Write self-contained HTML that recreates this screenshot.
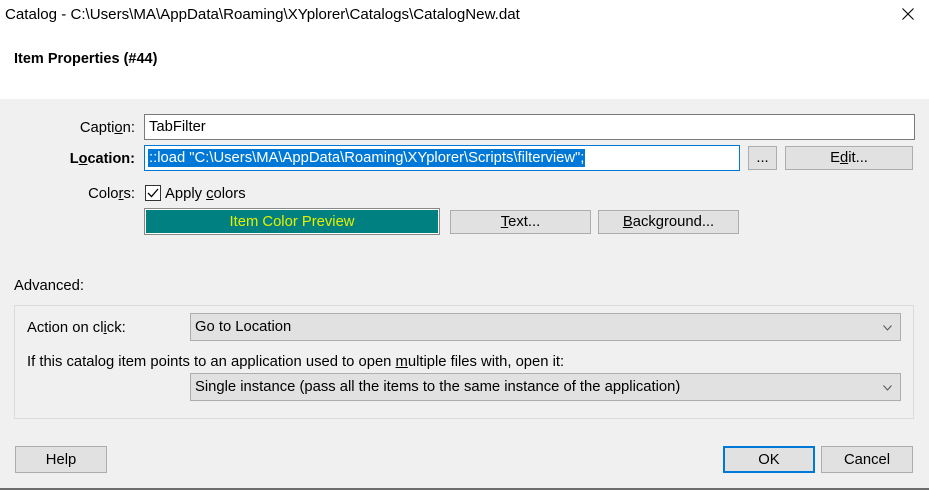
<!DOCTYPE html>
<html><head><style>
*{box-sizing:border-box;margin:0;padding:0}
body{width:929px;height:490px;background:#f0f0f0;font-family:"Liberation Sans",sans-serif;font-size:14.8px;color:#000;position:relative;overflow:hidden}
.a{position:absolute;white-space:nowrap}
.top{left:0;top:0;width:929px;height:99px;background:#fff}
.btn{position:absolute;background:#e1e1e1;border:1px solid #adadad;text-align:center;line-height:23px}
.inp{position:absolute;background:#fff;border:1px solid #7a7a7a}
.combo{position:absolute;background:#e1e1e1;border:1px solid #adadad;line-height:27px;padding-left:4px}
.combo svg{position:absolute;right:8px;top:11px}
u{text-decoration:underline}
</style></head><body>
<div class="a top"></div>
<div class="a" style="left:5px;top:6px;font-size:15.1px">Catalog - C:\Users\MA\AppData\Roaming\XYplorer\Catalogs\CatalogNew.dat</div>
<svg class="a" style="left:902px;top:8px" width="12" height="12"><path d="M0.5 0.5L11.5 11.5M11.5 0.5L0.5 11.5" stroke="#000" stroke-width="1.1"/></svg>
<div class="a" style="left:14px;top:51px;font-weight:bold;font-size:14.5px">Item Properties (#44)</div>

<div class="a" style="right:794px;top:120px">Capti<u>o</u>n:</div>
<div class="inp" style="left:144px;top:114px;width:771px;height:26px"><span class="a" style="left:4px;top:4px">TabFilter</span></div>

<div class="a" style="right:794px;top:151px;font-weight:bold;font-size:14.5px">L<u>o</u>cation:</div>
<div class="inp" style="left:144px;top:145px;width:596px;height:26px;border-color:#0078d7"><span class="a" style="left:3px;top:3px;background:#0078d7;color:#fff;padding:1px 1px 1px 1px">::load "C:\Users\MA\AppData\Roaming\XYplorer\Scripts\filterview";</span></div>
<div class="btn" style="left:748px;top:146px;width:29px;height:24px">...</div>
<div class="btn" style="left:785px;top:146px;width:128px;height:24px">E<u>d</u>it...</div>

<div class="a" style="right:794px;top:186px">Colo<u>r</u>s:</div>
<div class="a" style="left:145px;top:185px;width:16px;height:16px;background:#fff;border:1px solid #333"></div>
<svg class="a" style="left:147px;top:188px" width="12" height="10"><path d="M1 5L4.5 8.5L11 1" stroke="#000" stroke-width="1.3" fill="none"/></svg>
<div class="a" style="left:165px;top:186px">Apply <u>c</u>olors</div>
<div class="a" style="left:144px;top:208px;width:296px;height:27px;border:1px solid #888;background:#fff;padding:1px"><div style="background:#008080;color:#e6f000;height:23px;line-height:24px;text-align:center">Item Color Preview</div></div>
<div class="btn" style="left:450px;top:210px;width:141px;height:24px"><u>T</u>ext...</div>
<div class="btn" style="left:598px;top:210px;width:141px;height:24px"><u>B</u>ackground...</div>

<div class="a" style="left:14px;top:278px">Advanced:</div>
<div class="a" style="left:14px;top:305px;width:900px;height:114px;border:1px solid #dcdcdc"></div>
<div class="a" style="left:27px;top:320px">Action on cl<u>i</u>ck:</div>
<div class="combo" style="left:190px;top:313px;width:711px;height:28px">Go to Location<svg width="9" height="6"><path d="M0.5 0.5L4.5 5L8.5 0.5" stroke="#555" fill="none"/></svg></div>
<div class="a" style="left:27px;top:354px">If this catalog item points to an application used to open <u>m</u>ultiple files with, open it:</div>
<div class="combo" style="left:190px;top:373px;width:711px;height:28px">Single instance (pass all the items to the same instance of the application)<svg width="9" height="6"><path d="M0.5 0.5L4.5 5L8.5 0.5" stroke="#555" fill="none"/></svg></div>

<div class="btn" style="left:15px;top:446px;width:92px;height:27px;line-height:26px">Help</div>
<div class="btn" style="left:723px;top:446px;width:92px;height:27px;line-height:24px;border:2px solid #0078d7">OK</div>
<div class="btn" style="left:821px;top:446px;width:92px;height:27px;line-height:26px">Cancel</div>
<div class="a" style="left:0;top:488px;width:929px;height:2px;background:#6d6d6d"></div>
</body></html>
